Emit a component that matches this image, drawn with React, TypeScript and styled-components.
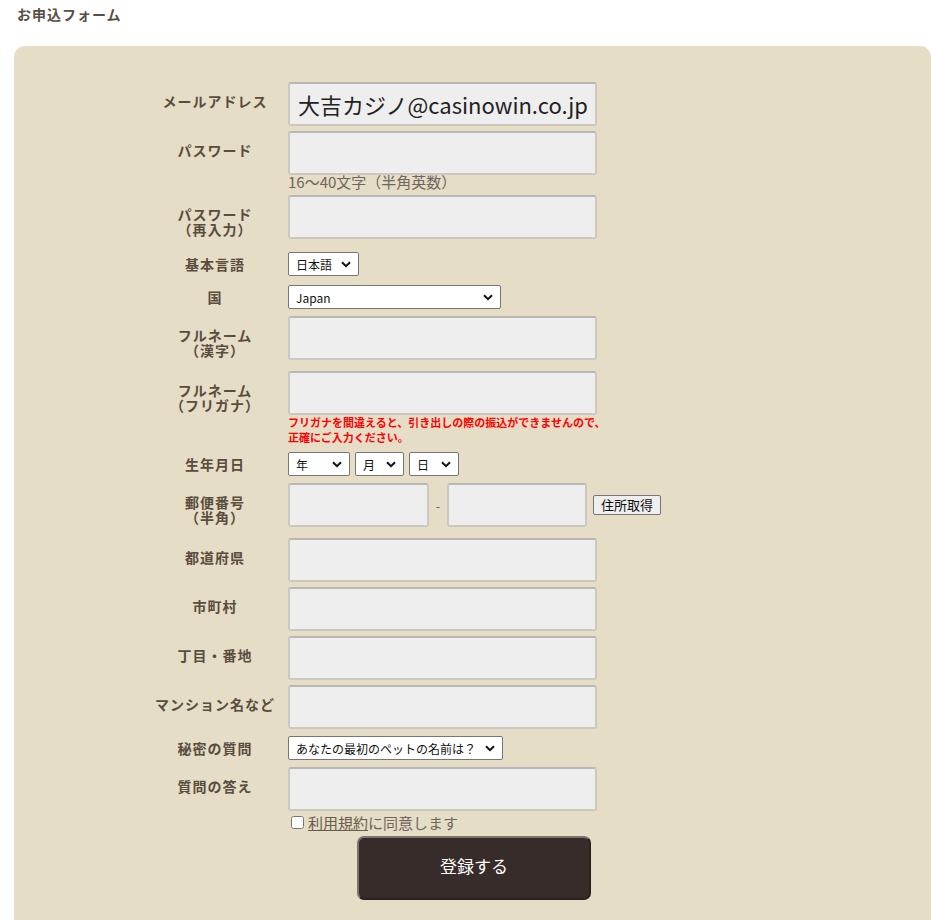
import styled, { createGlobalStyle } from "styled-components";

const GlobalStyle = createGlobalStyle`
	body {
		margin: 0;
		background: #ffffff;
		font-family: "Noto Sans CJK JP", "Liberation Sans", sans-serif;
	}
`;

const Page = styled.div`
	width: 931px;
	overflow: hidden;
`;

const Title = styled.h2`
	margin: 0;
	padding: 0 17px;
	font-size: 14px;
	letter-spacing: 1px;
	line-height: 28px;
	font-weight: bold;
	color: #5a4d42;
`;

const Panel = styled.div`
	margin: 18px 0 0 14px;
	background: #e5ddc6;
	border-radius: 11px 11px 0 0;
	padding: 34px 0 40px 136px;
`;

const Row = styled.div<{ $select?: boolean }>`
	display: grid;
	grid-template-columns: 130px 372px;
	column-gap: 8px;
	align-items: start;
	padding: ${(p) => (p.$select ? "4px 0 5px" : "2px 0 3px")};
`;

const Footer = styled.div`
	display: grid;
	grid-template-columns: 130px 372px;
	column-gap: 8px;
	align-items: start;
`;

const Actions = styled.div`
	grid-column: 2;
	display: flex;
	flex-direction: column;
	align-items: flex-start;
`;

const Label = styled.div<{ $select?: boolean }>`
	text-align: center;
	font-size: 14px;
	letter-spacing: 1px;
	font-weight: bold;
	line-height: ${(p) => (p.$select ? "24px" : "15px")};
	padding: ${(p) => (p.$select ? "0" : "12px 0 8px")};
	color: #5b4c3f;
	white-space: nowrap;
`;

const Field = styled.div`
	display: flex;
	flex-direction: column;
	align-items: flex-start;
`;

const Inline = styled.div<{ $gap: number }>`
	display: flex;
	align-items: center;
	gap: ${(p) => p.$gap}px;
	white-space: nowrap;
`;

const TextInput = styled.input<{ $w?: number }>`
	box-sizing: border-box;
	flex-shrink: 0;
	width: ${(p) => p.$w ?? 309}px;
	height: 44px;
	margin: 0;
	padding: 0 8px;
	background: #eeeeee;
	border: 2px solid #cbc8c2;
	border-top-color: #b9b7b3;
	border-radius: 3px;
	font-family: "Noto Sans CJK JP", "Open Sans", sans-serif;
	font-size: 22px;
	color: #222;
	outline: none;
`;

const SelectWrap = styled.span`
	position: relative;
	display: inline-flex;

	svg {
		position: absolute;
		right: 8px;
		top: 9px;
		pointer-events: none;
	}
`;

const Select = styled.select<{ $w: number }>`
	appearance: none;
	box-sizing: border-box;
	width: ${(p) => p.$w}px;
	height: 24px;
	margin: 0;
	padding: 0 22px 0 7px;
	background: #ffffff;
	border: 1px solid #767676;
	border-radius: 2px;
	font-family: "Noto Sans CJK JP", "Liberation Sans", sans-serif;
	font-size: 12px;
	color: #111;
`;

const Hint = styled.div`
	font-size: 15px;
	line-height: 14px;
	margin-bottom: 1px;
	color: #6f655c;
`;

const Warning = styled.div`
	font-size: 11px;
	line-height: 15px;
	font-weight: bold;
	color: #ff0000;
`;

const Dash = styled.span`
	flex-shrink: 0;
	width: 18px;
	text-align: center;
	font-size: 13px;
	color: #6f655c;
`;

const SmallButton = styled.button`
	flex-shrink: 0;
	height: 20px;
	margin: 0 0 0 6px;
	padding: 0 7px;
	background: #efefef;
	border: 1px solid #767676;
	border-radius: 2px;
	font-family: "Noto Sans CJK JP", sans-serif;
	font-size: 13px;
	line-height: 18px;
	color: #111;
	white-space: nowrap;
`;

const Agree = styled.label`
	display: flex;
	align-items: center;
	height: 16px;
	font-size: 15px;
	color: #6f655c;

	input {
		width: 13px;
		height: 13px;
		margin: 0 4px 0 3px;
	}

	a {
		color: #6b5b4e;
		text-decoration: underline;
	}
`;

const Submit = styled.button`
	align-self: center;
	width: 234px;
	height: 64px;
	margin-top: 6px;
	background: #372c29;
	border: 2px solid #2a2220;
	border-top-color: #7a7570;
	border-left-color: #7a7570;
	border-radius: 7px;
	font-family: "Noto Sans CJK JP", sans-serif;
	font-size: 17px;
	line-height: 20px;
	padding: 0 0 4px;
	color: #ffffff;
`;

const Chevron = () => (
	<svg width="10" height="7" viewBox="0 0 10 7">
		<path d="M1 1.2 L5 5.2 L9 1.2" fill="none" stroke="#111" strokeWidth="2" />
	</svg>
);

type DropdownProps = {
	width: number;
	options: string[];
};

const Dropdown = ({ width, options }: DropdownProps) => (
	<SelectWrap>
		<Select $w={width} defaultValue={options[0]}>
			{options.map((o) => (
				<option key={o} value={o}>{o}</option>
			))}
		</Select>
		<Chevron />
	</SelectWrap>
);

type InputRowProps = {
	label: React.ReactNode;
	value?: string;
	children?: React.ReactNode;
};

const InputRow = ({ label, value, children }: InputRowProps) => (
	<Row>
		<Label>{label}</Label>
		<Field>
			<TextInput type="text" defaultValue={value} />
			{children}
		</Field>
	</Row>
);

export default function App() {
	return (
		<Page>
			<GlobalStyle />
			<Title>お申込フォーム</Title>
			<Panel>
				<InputRow label="メールアドレス" value="大吉カジノ@casinowin.co.jp" />
				<InputRow label="パスワード">
					<Hint>16〜40文字（半角英数）</Hint>
				</InputRow>
				<InputRow label={<>パスワード<br />（再入力）</>} />
				<Row $select>
					<Label $select>基本言語</Label>
					<Field>
						<Dropdown width={71} options={["日本語"]} />
					</Field>
				</Row>
				<Row $select>
					<Label $select>国</Label>
					<Field>
						<Dropdown width={213} options={["Japan"]} />
					</Field>
				</Row>
				<InputRow label={<>フルネーム<br />（漢字）</>} />
				<InputRow label={<>フルネーム<br />（フリガナ）</>}>
					<Warning>
						フリガナを間違えると、引き出しの際の振込ができませんので、
						<br />
						正確にご入力ください。
					</Warning>
				</InputRow>
				<Row $select>
					<Label $select>生年月日</Label>
					<Inline $gap={5}>
						<Dropdown width={62} options={["年"]} />
						<Dropdown width={49} options={["月"]} />
						<Dropdown width={50} options={["日"]} />
					</Inline>
				</Row>
				<Row>
					<Label>郵便番号<br />（半角）</Label>
					<Inline $gap={0}>
						<TextInput $w={141} type="text" />
						<Dash>-</Dash>
						<TextInput $w={140} type="text" />
						<SmallButton type="button">住所取得</SmallButton>
					</Inline>
				</Row>
				<InputRow label="都道府県" />
				<InputRow label="市町村" />
				<InputRow label="丁目・番地" />
				<InputRow label="マンション名など" />
				<Row $select>
					<Label $select>秘密の質問</Label>
					<Field>
						<Dropdown width={215} options={["あなたの最初のペットの名前は？"]} />
					</Field>
				</Row>
				<InputRow label="質問の答え" />
				<Footer>
					<Actions>
						<Agree>
							<input type="checkbox" />
							<a href="#terms">利用規約</a>に同意します
						</Agree>
						<Submit type="button">登録する</Submit>
					</Actions>
				</Footer>
			</Panel>
		</Page>
	);
}
